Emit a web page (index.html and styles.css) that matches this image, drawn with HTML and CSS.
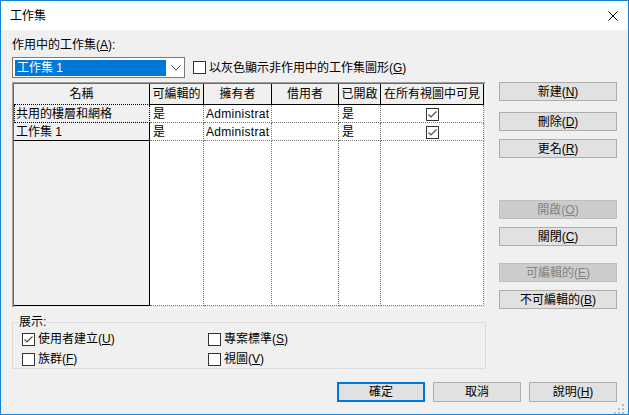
FILE: index.html
```html
<!DOCTYPE html>
<html lang="zh-Hant">
  <head>
    <meta charset="UTF-8" />
    <title>工作集</title>
    <link rel="stylesheet" href="styles.css">
  </head>
  <body>
    <div class="window">
      <div class="titlebar">
        <span class="title">工作集</span>
        <svg class="close" width="10" height="10" viewBox="0 0 10 10">
          <path d="M0.5 0.5L9.5 9.5M9.5 0.5L0.5 9.5" stroke="#000" stroke-width="1" fill="none" />
        </svg>
      </div>

      <div class="content">
        <div class="field-label">作用中的工作集(<u>A</u>):</div>
        <div class="combo-row">
          <div class="combo">
            <span class="combo-value">工作集 1</span>
            <svg class="chevron" width="10" height="6" viewBox="0 0 10 6">
              <polyline points="0.5,0.5 5,5 9.5,0.5" stroke="#444" stroke-width="1" fill="none" />
            </svg>
          </div>
          <label class="check-label">
            <span class="checkbox"></span><span>以灰色顯示非作用中的工作集圖形(<u>G</u>)</span>
          </label>
        </div>

        <div class="main">
          <div class="left">
            <div class="grid-frame">
              <div class="grid-box">
                <table class="grid">
                  <colgroup>
                    <col style="width: 136px" />
                    <col style="width: 54px" />
                    <col style="width: 68px" />
                    <col style="width: 67px" />
                    <col style="width: 42px" />
                    <col />
                  </colgroup>
                  <tr class="head-row">
                    <th class="name-head">名稱</th>
                    <th>可編輯的</th>
                    <th>擁有者</th>
                    <th>借用者</th>
                    <th>已開啟</th>
                    <th>在所有視圖中可見</th>
                  </tr>
                  <tr class="data-row">
                    <td class="name focused">共用的樓層和網格</td>
                    <td>是</td>
                    <td class="owner">Administrat</td>
                    <td></td>
                    <td>是</td>
                    <td class="center"><span class="checkbox checked"><svg width="11" height="11" viewBox="0 0 11 11"><polyline points="1.5,5.5 4,8 9.5,2.5" stroke="#4d4d4d" stroke-width="1.2" fill="none" /></svg></span></td>
                  </tr>
                  <tr class="data-row">
                    <td class="name">工作集 1</td>
                    <td>是</td>
                    <td class="owner">Administrat</td>
                    <td></td>
                    <td>是</td>
                    <td class="center"><span class="checkbox checked"><svg width="11" height="11" viewBox="0 0 11 11"><polyline points="1.5,5.5 4,8 9.5,2.5" stroke="#4d4d4d" stroke-width="1.2" fill="none" /></svg></span></td>
                  </tr>
                  <tr class="filler-row">
                    <td class="name"></td>
                    <td></td>
                    <td></td>
                    <td></td>
                    <td></td>
                    <td></td>
                  </tr>
                </table>
              </div>
            </div>

            <fieldset class="show-group">
              <legend>展示:</legend>
              <div class="show-options">
                <label class="check-label"><span class="checkbox checked"><svg width="11" height="11" viewBox="0 0 11 11"><polyline points="1.5,5.5 4,8 9.5,2.5" stroke="#4d4d4d" stroke-width="1.2" fill="none" /></svg></span><span>使用者建立(<u>U</u>)</span></label>
                <label class="check-label"><span class="checkbox"></span><span>專案標準(<u>S</u>)</span></label>
                <label class="check-label"><span class="checkbox"></span><span>族群(<u>F</u>)</span></label>
                <label class="check-label"><span class="checkbox"></span><span>視圖(<u>V</u>)</span></label>
              </div>
            </fieldset>
          </div>

          <div class="side-buttons">
            <button class="btn"><span>新建(<u>N</u>)</span></button>
            <button class="btn gap-sm"><span>刪除(<u>D</u>)</span></button>
            <button class="btn"><span>更名(<u>R</u>)</span></button>
            <button class="btn gap-lg" disabled><span>開啟(<u>O</u>)</span></button>
            <button class="btn"><span>關閉(<u>C</u>)</span></button>
            <button class="btn gap-md" disabled><span>可編輯的(<u>E</u>)</span></button>
            <button class="btn"><span>不可編輯的(<u>B</u>)</span></button>
          </div>
        </div>

        <div class="footer">
          <button class="btn btn-wide btn-default">確定</button>
          <button class="btn btn-wide">取消</button>
          <button class="btn btn-wide"><span>說明(<u>H</u>)</span></button>
        </div>
      </div>

      <svg class="grip" width="10" height="10" viewBox="0 0 10 10">
        <rect x="8" y="0" width="2" height="2" fill="#bcbcbc" />
        <rect x="4" y="4" width="2" height="2" fill="#bcbcbc" />
        <rect x="8" y="4" width="2" height="2" fill="#bcbcbc" />
        <rect x="0" y="8" width="2" height="2" fill="#bcbcbc" />
        <rect x="4" y="8" width="2" height="2" fill="#bcbcbc" />
        <rect x="8" y="8" width="2" height="2" fill="#bcbcbc" />
      </svg>
    </div>
  </body>
</html>
```

FILE: styles.css
```css
body {
  margin: 0;
  font-family: "Liberation Sans", "Noto Sans CJK TC", sans-serif;
  font-size: 12px;
  line-height: 16px;
  color: #000;
  background-color: #f0f0f0;
  text-autospace: no-autospace;
}

/* Window frame */
.window {
  position: relative;
  width: 629px;
  height: 415px;
  box-sizing: border-box;
  border: 1px solid #1883d7;
  display: flex;
  flex-direction: column;
  background-color: #f0f0f0;
}

.titlebar {
  flex: none;
  height: 29px;
  display: flex;
  align-items: center;
  justify-content: space-between;
  padding: 0 10px 0 9px;
  background-color: #fff;
}

.close {
  display: block;
}

.content {
  flex: 1;
  display: flex;
  flex-direction: column;
  padding: 7px 11px 0 11px;
}

.field-label {
  height: 16px;
}

/* Combo + top checkbox */
.combo-row {
  display: flex;
  align-items: center;
  height: 21px;
  margin-top: 4px;
}

.combo {
  width: 173px;
  height: 21px;
  box-sizing: border-box;
  border: 1px solid #7a7a7a;
  background-color: #fff;
  display: flex;
  align-items: center;
  padding-left: 2px;
}

.combo-value {
  width: 151px;
  height: 16px;
  box-sizing: border-box;
  padding-left: 2px;
  background-color: #0078d7;
  color: #fff;
}

.chevron {
  display: block;
  margin-left: 5px;
}

.check-label {
  display: flex;
  align-items: center;
  gap: 3px;
  white-space: nowrap;
}

.combo-row .check-label {
  margin-left: 8px;
}

.checkbox {
  display: inline-flex;
  align-items: center;
  justify-content: center;
  width: 13px;
  height: 13px;
  box-sizing: border-box;
  border: 1px solid #333;
  background-color: #fff;
  flex: none;
}

.checkbox svg {
  display: block;
}

/* Main area */
.main {
  display: flex;
  gap: 13px;
  margin-top: 4px;
}

.left {
  width: 474px;
  display: flex;
  flex-direction: column;
}

.grid-frame {
  height: 226px;
  box-sizing: border-box;
  border: 1px solid;
  border-color: #a0a0a0 #fff #fff #a0a0a0;
}

.grid-box {
  height: 100%;
  box-sizing: border-box;
  border: 1px solid;
  border-color: #696969 #e3e3e3 #e3e3e3 #696969;
  background-color: #fff;
  overflow: hidden;
}

.grid {
  width: 100%;
  table-layout: fixed;
  border-spacing: 0;
}

.grid th,
.grid td {
  box-sizing: border-box;
  padding: 0;
  white-space: nowrap;
  overflow: hidden;
}

.grid th {
  font-weight: normal;
  text-align: center;
  background-color: #f0f0f0;
  border-right: 1px solid #000;
  border-bottom: 1px solid #000;
}

.grid td {
  padding-left: 3px;
  border-right: 1px dotted #777;
  border-bottom: 1px dotted #777;
}

.grid td.owner {
  padding-left: 2px;
  letter-spacing: 0.3px;
}

.head-row {
  height: 21px;
}

.data-row {
  height: 18px;
}

.filler-row {
  height: 165px;
}

.grid .name {
  padding-left: 2px;
  background-color: #f0f0f0;
  border-right: 1px solid #000;
  border-bottom: 1px solid #000;
}

.grid .name-head {
  border-bottom: 1px dotted #000;
}

.grid .name.focused {
  padding-left: 1px;
  border-left: 1px dotted #000;
  border-right: 1px dotted #000;
  border-bottom: 1px dotted #000;
}

.grid td.center {
  padding-left: 0;
  text-align: center;
}

.grid td.center .checkbox {
  vertical-align: middle;
}

/* Show group */
.show-group {
  margin: 6px 0 0 0;
  padding: 0 8px 0 9px;
  border: 1px solid #dcdcdc;
  min-inline-size: 0;
}

.show-group legend {
  padding: 0 1px;
  margin-left: -4px;
}

.show-options {
  display: grid;
  grid-template-columns: 186px auto;
  grid-auto-rows: 18px;
  row-gap: 2px;
}

/* Buttons */
.btn {
  height: 19px;
  box-sizing: border-box;
  padding: 0;
  border: 1px solid #adadad;
  background-color: #e1e1e1;
  font: inherit;
  color: #000;
  display: flex;
  align-items: center;
  justify-content: center;
}

.btn:disabled {
  background-color: #cccccc;
  border-color: #bfbfbf;
  color: #838383;
}

.side-buttons {
  width: 118px;
  display: flex;
  flex-direction: column;
  gap: 8px;
}

.side-buttons .gap-sm {
  margin-top: 3px;
}

.side-buttons .gap-lg {
  margin-top: 34px;
}

.side-buttons .gap-md {
  margin-top: 9px;
}

.footer {
  display: flex;
  justify-content: flex-end;
  gap: 8px;
  margin-top: 13px;
}

.btn-wide {
  width: 88px;
  height: 20px;
}

.btn-default {
  border: 2px solid #0078d7;
}

.grip {
  position: absolute;
  right: 4px;
  bottom: 0;
}
```
